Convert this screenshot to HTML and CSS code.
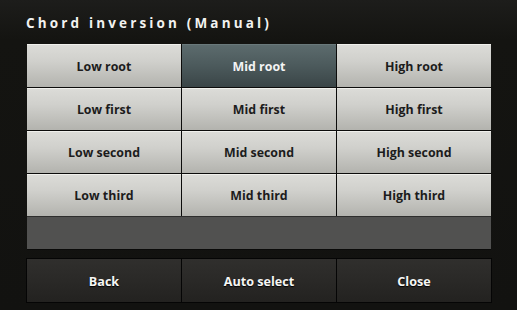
FILE: index.html
```html
<!DOCTYPE html>
<html>
<head>
<meta charset="utf-8">
<link rel="stylesheet" href="styles.css">
</head>
<body>
<div class="screen">
  <h1 class="title">Chord inversion (Manual)</h1>
  <div class="grid">
    <div class="btn">Low root</div>
    <div class="btn sel">Mid root</div>
    <div class="btn">High root</div>
    <div class="btn">Low first</div>
    <div class="btn">Mid first</div>
    <div class="btn">High first</div>
    <div class="btn">Low second</div>
    <div class="btn">Mid second</div>
    <div class="btn">High second</div>
    <div class="btn">Low third</div>
    <div class="btn">Mid third</div>
    <div class="btn">High third</div>
  </div>
  <div class="filler"></div>
  <div class="actions">
    <div class="abtn">Back</div>
    <div class="abtn">Auto select</div>
    <div class="abtn">Close</div>
  </div>
</div>
</body>
</html>
```

FILE: styles.css
```css
html, body {
  margin: 0;
  padding: 0;
  width: 517px;
  height: 310px;
  overflow: hidden;
}
body {
  background: linear-gradient(#1d1d1b 0px, #141411 40px, #121210 310px);
  font-family: "Open Sans", "DejaVu Sans", sans-serif;
}
.screen {
  padding: 0 26px 0 27px;
  display: flex;
  flex-direction: column;
}
.title {
  margin: 0 0 0 -1px;
  height: 44px;
  box-sizing: border-box;
  padding-top: 13px;
  font-size: 13.5px;
  font-weight: 700;
  letter-spacing: 3.15px;
  color: #f2f2f0;
  line-height: 20px;
}
.grid {
  display: grid;
  grid-template-columns: 154px 154px 154px;
  grid-template-rows: 43px 42px 42px 42px;
  gap: 1px;
  background: #0c0c0b;
  width: 464px;
}
.btn {
  display: flex;
  align-items: center;
  justify-content: center;
  background: linear-gradient(#dcdcd8 0%, #d0d0cc 40%, #b3b3ae 100%);
  box-shadow: inset 0 1px 0 #f0f0ec;
  color: #1c1c1c;
  font-size: 12.4px;
  font-weight: 700;
  padding-top: 1px;
}
.btn.sel {
  background: linear-gradient(#5d6c6e 0%, #4c5a5c 50%, #3a4547 100%);
  box-shadow: inset 0 1px 0 #6a797b;
  color: #f4f4f4;
}
.filler {
  width: 464px;
  height: 32px;
  background: #515150;
  border-top: 1px solid #2e2e2d;
  box-shadow: 0 1px 0 #0a0a09;
}
.actions {
  margin-top: 9px;
  display: grid;
  grid-template-columns: 154px 154px 154px;
  gap: 1px;
  width: 464px;
  height: 43px;
  background: #050505;
  border: 1px solid #050505;
  margin-left: -1px;
}
.abtn {
  display: flex;
  align-items: center;
  justify-content: center;
  background: linear-gradient(#302f2d 0%, #2a2927 50%, #232220 100%);
  color: #f6f6f4;
  font-size: 12.6px;
  font-weight: 700;
  padding-top: 2px;
  text-shadow: 0 1px 1px #000;
}
```
